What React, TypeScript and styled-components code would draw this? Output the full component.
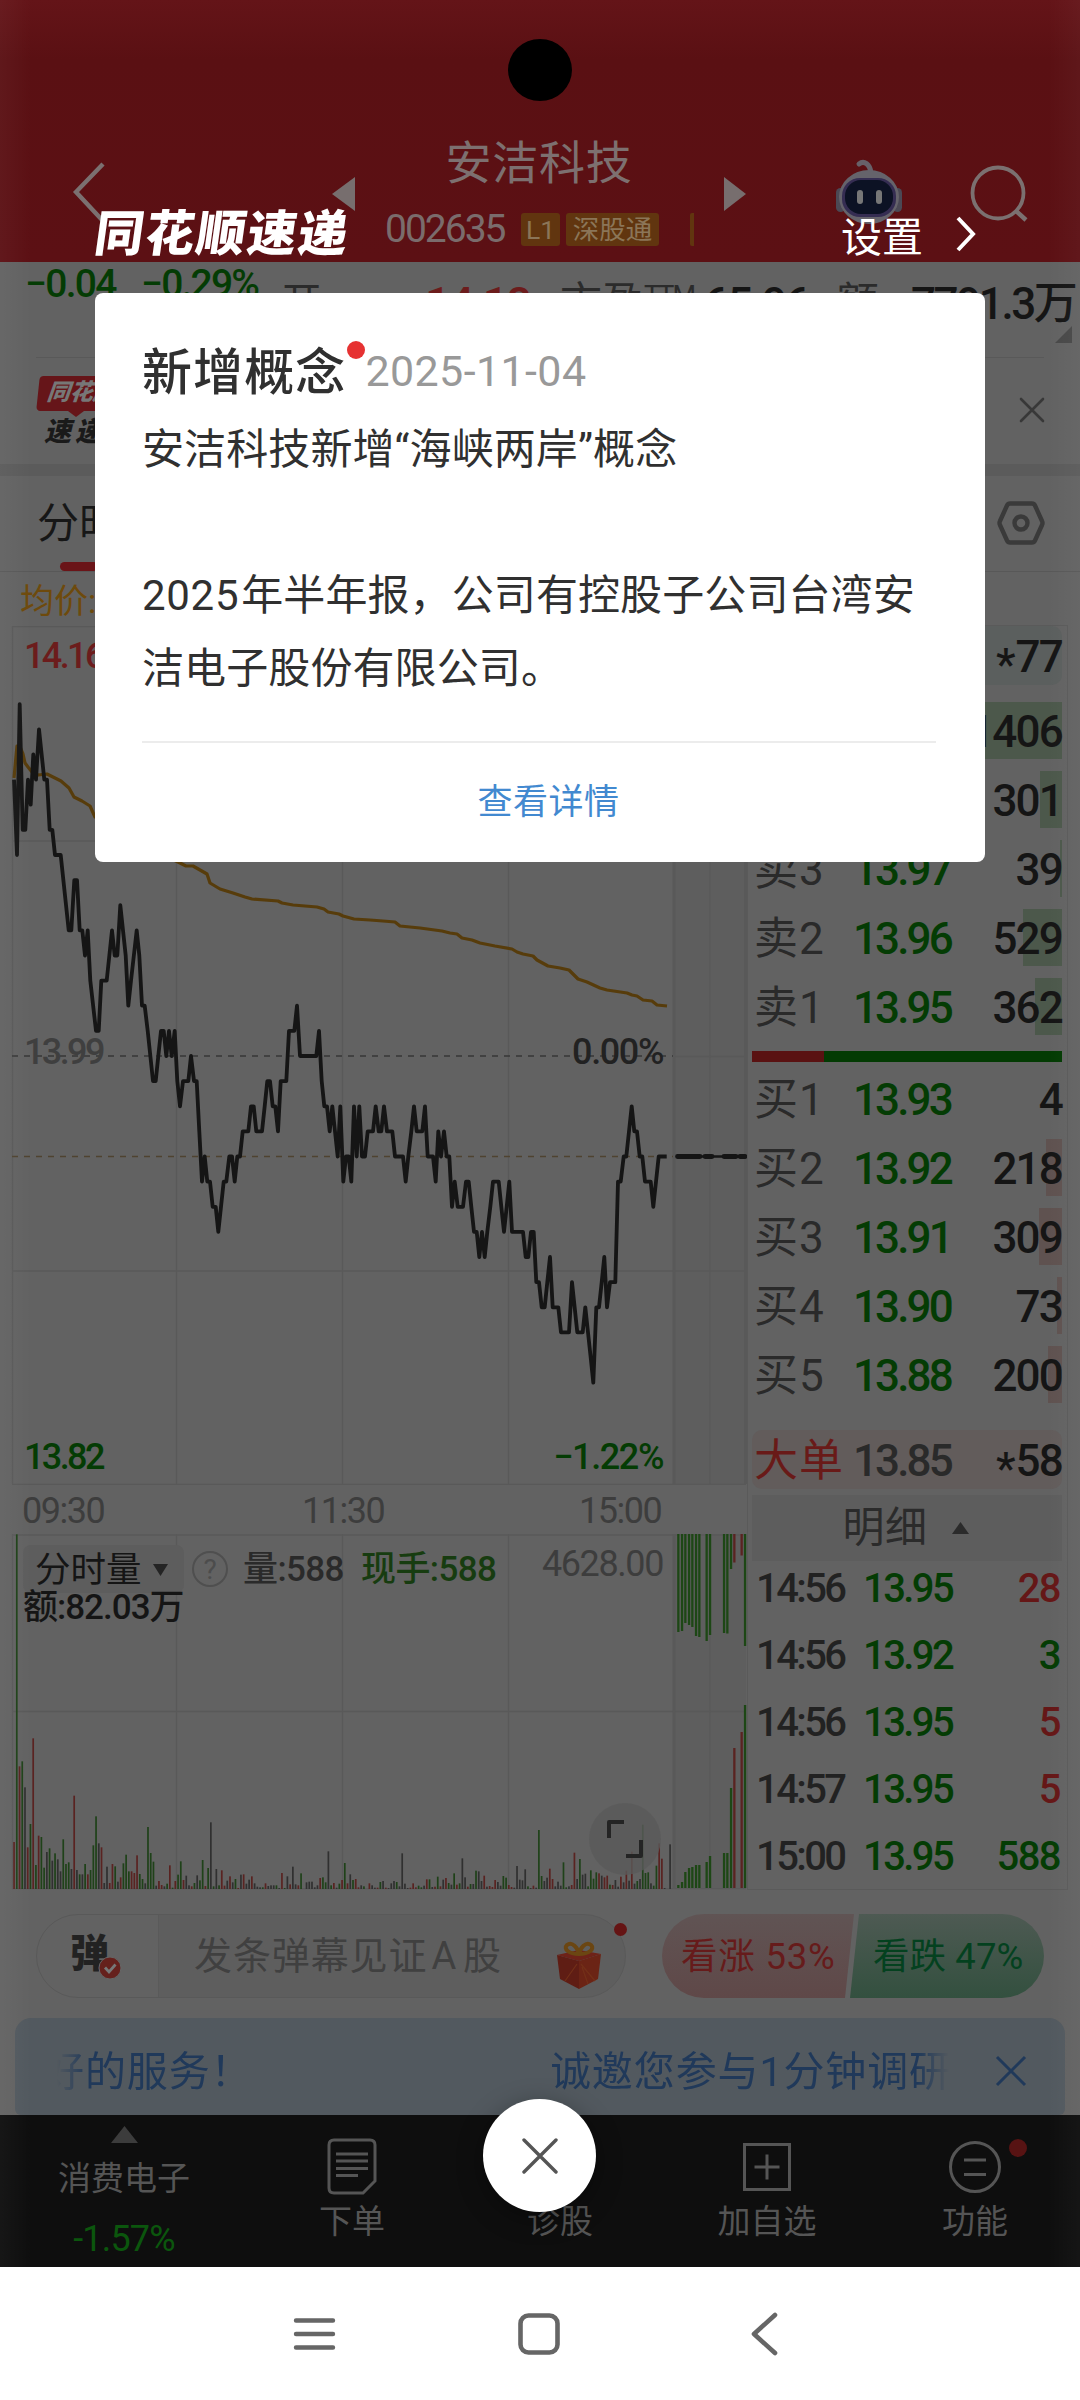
import React from "react";
import styled, { createGlobalStyle } from "styled-components";

const GlobalStyle = createGlobalStyle`
  * { box-sizing: border-box; }
  body {
    margin: 0;
    background: #626262;
    font-family: Roboto, "Noto Sans CJK SC", sans-serif;
    -webkit-font-smoothing: antialiased;
  }
`;

const GREEN = "#043c04";
const RED = "#6c1c1c";
const INK = "#151515";
const GRID = "#595959";

const Page = styled.div`
  position: relative;
  display: flex;
  flex-direction: column;
  width: 1080px;
  height: 2400px;
  overflow: hidden;
  background: #626262;
  white-space: nowrap;
`;

/* ---------- header ---------- */

const Header = styled.header`
  display: flex;
  align-items: flex-start;
  flex: none;
  height: 262px;
  padding-top: 133px;
  background: linear-gradient(#641418, #5a1013 60px, #5c1014);
`;

const Glyph = styled.svg<{ $ml?: number; $mr?: number; $mt?: number }>`
  display: block;
  flex: none;
  overflow: visible;
  margin-left: ${(p) => p.$ml ?? 0}px;
  margin-right: ${(p) => p.$mr ?? 0}px;
  margin-top: ${(p) => p.$mt ?? 0}px;
`;

const StockTitle = styled.div`
  width: 369px;
`;

const StockName = styled.div`
  height: 58px;
  line-height: 61px;
  font-size: 46px;
  letter-spacing: 0.8px;
  text-align: center;
  text-indent: -1px;
  color: #7d7070;
`;

const StockCodeRow = styled.div`
  display: flex;
  align-items: center;
  height: 44px;
  margin-top: 16px;
  padding-left: 30px;
`;

const StockCode = styled.span`
  width: 136px;
  font-size: 39px;
  letter-spacing: -2px;
  color: #7a6c6c;
`;

const Badge = styled.span<{ $w: number }>`
  width: ${(p) => p.$w}px;
  height: 33px;
  margin-right: 6px;
  border-radius: 3px;
  background: #61350f;
  color: #8b7558;
  font-size: 26.5px;
  line-height: 33px;
  text-align: center;
`;

const BadgeEdge = styled.span`
  width: 4px;
  height: 33px;
  margin-left: 25px;
  border-radius: 2px 0 0 2px;
  background: #61350f;
`;

const Camera = styled.div`
  position: absolute;
  left: 508px;
  top: 39px;
  width: 64px;
  height: 62px;
  border-radius: 50%;
  background: #000;
`;

/* ---------- quote strip ---------- */

const QuoteStrip = styled.section`
  display: flex;
  flex: none;
  height: 95px;
`;

const QuoteCell = styled.span<{ $w: number; $c: string; $s?: number; $top?: number; $ls?: number; $bold?: boolean; $pl?: number }>`
  width: ${(p) => p.$w}px;
  flex: none;
  padding-top: ${(p) => p.$top ?? 1}px;
  padding-left: ${(p) => p.$pl ?? 0}px;
  line-height: 42px;
  font-size: ${(p) => p.$s ?? 45}px;
  letter-spacing: ${(p) => p.$ls ?? -2}px;
  font-weight: ${(p) => (p.$bold ? 500 : 400)};
  color: ${(p) => p.$c};
`;

const Suffix = styled.small`
  position: relative;
  top: -12px;
  font-size: 27px;
  letter-spacing: -2px;
`;

const NewsStrip = styled.section`
  display: flex;
  justify-content: space-between;
  flex: none;
  height: 107px;
  margin: 0 36px;
  padding-top: 18px;
  border-top: 1px solid #595959;
`;

const NewsLogo = styled.div`
  width: 90px;
  font-style: italic;
  font-weight: 900;
`;

const NewsLogoTop = styled.div`
  width: 84px;
  height: 35px;
  margin-left: 2px;
  padding: 2px 0 0 9px;
  border-radius: 4px;
  transform: skewX(-6deg);
  background: #661519;
  color: #777;
  font-size: 23px;
  line-height: 30px;
`;

const NewsLogoTail = styled.div`
  width: 0;
  height: 0;
  margin-left: 32px;
  border: 8px solid transparent;
  border-top: 6px solid #661519;
  border-bottom: 0;
`;

const NewsLogoBottom = styled.div`
  padding-left: 8px;
  font-size: 27px;
  line-height: 31px;
  letter-spacing: 4px;
  color: #1a1a1a;
`;

const Band = styled.div`
  flex: none;
  height: 12px;
  background: #5b5b5b;
`;

const TabStrip = styled.nav`
  display: flex;
  justify-content: space-between;
  flex: none;
  height: 96px;
  padding: 0 36px 0 37px;
  border-bottom: 1px solid #585858;
`;

const Tab = styled.div`
  display: flex;
  flex-direction: column;
  align-items: center;
  height: 95px;
  font-size: 42px;
  line-height: 96px;
  color: #171717;
  &::after {
    content: "";
    flex: none;
    width: 38px;
    height: 9px;
    margin-top: -10px;
    border-radius: 5px;
    background: #6a1418;
  }
`;

/* ---------- market area ---------- */

const Market = styled.main`
  display: grid;
  grid-template-columns: 747px 321px;
  flex: none;
  height: 1318px;
`;

const ChartColumn = styled.section`
  display: flex;
  flex-direction: column;
`;

const AverageLabel = styled.div`
  height: 54px;
  padding-left: 20px;
  line-height: 58px;
  font-size: 34px;
  color: #6e4a0c;
`;

const PricePane = styled.div`
  position: relative;
  height: 859px;
`;

const AxisLabel = styled.span<{ $c: string; $y: number; $x?: number; $r?: number; $light?: boolean }>`
  position: absolute;
  top: ${(p) => p.$y}px;
  left: ${(p) => (p.$x === undefined ? "auto" : p.$x + "px")};
  right: ${(p) => (p.$r === undefined ? "auto" : p.$r + "px")};
  font-size: 36px;
  line-height: 40px;
  font-weight: ${(p) => (p.$light ? 400 : 500)};
  letter-spacing: ${(p) => (p.$x === undefined ? -1.4 : -2.6)}px;
  color: ${(p) => p.$c};
`;

const TimeAxis = styled.div`
  display: grid;
  grid-template-columns: 280px 277px 1fr;
  height: 49px;
  padding-left: 22px;
  line-height: 53px;
  font-size: 36px;
  letter-spacing: -1.5px;
  color: #3d3d3d;
`;

const VolumePane = styled.div`
  position: relative;
  height: 356px;
`;

const VolumeHead = styled.div`
  position: absolute;
  left: 23px;
  top: 11px;
  display: flex;
  align-items: center;
  width: 640px;
  height: 48px;
  line-height: 34px;
`;

const IndicatorPick = styled.div`
  display: flex;
  align-items: center;
  justify-content: space-between;
  width: 161px;
  height: 48px;
  padding: 2px 15px 0 12px;
  border-radius: 8px;
  background: #5d5d5d;
  font-size: 35.5px;
  line-height: 34px;
  color: ${INK};
`;

const HelpDot = styled.div`
  width: 36px;
  height: 36px;
  margin: 0 15px 0 8px;
  border: 2px solid #4f4f4f;
  border-radius: 50%;
  text-align: center;
  font-size: 28px;
  line-height: 33px;
  color: #4c4c4c;
`;

const VolumeText = styled.span<{ $c: string; $w: number }>`
  width: ${(p) => p.$w}px;
  margin-top: 1px;
  font-size: 35px;
  font-weight: 500;
  letter-spacing: -0.6px;
  color: ${(p) => p.$c};
`;

const Turnover = styled.div`
  position: absolute;
  left: 23px;
  top: 57px;
  font-size: 35px;
  line-height: 34px;
  font-weight: 500;
  letter-spacing: -1px;
  color: ${INK};
`;

const ExpandButton = styled.div`
  position: absolute;
  left: 589px;
  top: 269px;
  width: 72px;
  height: 72px;
  border-radius: 50%;
  background: rgba(90, 90, 90, 0.8);
`;

/* ---------- order book ---------- */

const Book = styled.section`
  display: flex;
  flex-direction: column;
  height: 1265px;
  margin-top: 53px;
  padding-left: 4px;
  padding-right: 5px;
  border: 1px solid #5a5a5a;
`;

const BigOrder = styled.div<{ $bg: string }>`
  display: grid;
  grid-template-columns: 99px 110px 1fr;
  flex: none;
  height: 59px;
  padding-left: 2px;
  border-radius: 10px;
  background: ${(p) => p.$bg};
  line-height: 62px;
`;

const Levels = styled.div<{ $top: number; $h: number }>`
  display: flex;
  flex-direction: column;
  flex: none;
  height: ${(p) => p.$h}px;
  padding-top: ${(p) => p.$top}px;
`;

const Level = styled.div<{ $bar: number; $tint: string }>`
  display: grid;
  grid-template-columns: 99px 110px 1fr;
  flex: none;
  height: 57px;
  margin-bottom: 12px;
  padding-left: 2px;
  line-height: 61px;
  background: linear-gradient(${(p) => p.$tint}, ${(p) => p.$tint}) right / ${(p) => p.$bar}px 100% no-repeat;
`;

const Side = styled.span<{ $c?: string }>`
  font-size: 44px;
  letter-spacing: 1px;
  color: ${(p) => p.$c ?? "#2a2a2a"};
`;

const Price = styled.span<{ $c: string }>`
  font-size: 44px;
  font-weight: 500;
  letter-spacing: -2.9px;
  color: ${(p) => p.$c};
`;

const Amount = styled.span<{ $c?: string }>`
  font-size: 44px;
  font-weight: 500;
  letter-spacing: -1.8px;
  text-align: right;
  color: ${(p) => p.$c ?? INK};
`;

const Star = styled.span`
  position: relative;
  top: 8px;
  letter-spacing: 0;
`;

const RatioBar = styled.div`
  flex: none;
  height: 11px;
  background: linear-gradient(90deg, #5a1212 0 72px, #033b03 72px);
`;

const DetailHead = styled.div`
  display: flex;
  align-items: center;
  justify-content: center;
  gap: 24px;
  flex: none;
  height: 66px;
  margin-top: 6px;
  padding-right: 3px;
  background: #5d5d5d;
  font-size: 42px;
  line-height: 66px;
  letter-spacing: 0.5px;
  color: #2b2b2b;
`;

const Trade = styled.div`
  display: grid;
  grid-template-columns: 107px 110px 1fr;
  flex: none;
  height: 67px;
  padding: 0 2px 0 4px;
  line-height: 55px;
  font-size: 40px;
  font-weight: 500;
`;

const TradeCell = styled.span<{ $c: string; $right?: boolean }>`
  color: ${(p) => p.$c};
  letter-spacing: ${(p) => (p.$right ? -1.6 : -2.6)}px;
  text-align: ${(p) => (p.$right ? "right" : "left")};
`;

/* ---------- footer strips ---------- */

const ChatRow = styled.section`
  display: flex;
  justify-content: space-between;
  flex: none;
  height: 128px;
  padding: 24px 36px 0;
`;

const ChatInput = styled.div`
  position: relative;
  display: flex;
  width: 590px;
  height: 84px;
  border: 1px solid #595959;
  border-radius: 42px;
  background: linear-gradient(90deg, #626262 121px, #5a5a5a 121px 122px, #5e5e5e 122px);
`;

const ChatMark = styled.div`
  width: 121px;
  padding-left: 33px;
  font-size: 39px;
  font-weight: 900;
  line-height: 78px;
  color: #222;
`;

const ChatHint = styled.div`
  flex: 1;
  padding-left: 36px;
  font-size: 38px;
  line-height: 83px;
  letter-spacing: 0.9px;
  color: #404040;
`;

const WideLetter = styled.span`
  margin: 0 6px 0 4px;
`;

const CheckDot = styled.svg`
  position: absolute;
  left: 61px;
  top: 41px;
`;

const NoticeDot = styled.i<{ $x: number; $y: number; $d: number; $c: string }>`
  position: absolute;
  left: ${(p) => p.$x}px;
  top: ${(p) => p.$y}px;
  width: ${(p) => p.$d}px;
  height: ${(p) => p.$d}px;
  border-radius: 50%;
  background: ${(p) => p.$c};
`;

const Vote = styled.div`
  display: flex;
  width: 382px;
  height: 84px;
  border-radius: 42px;
  overflow: hidden;
  font-size: 36.5px;
  line-height: 86px;
  letter-spacing: 0.1px;
`;

const VoteUp = styled.div`
  width: 192px;
  padding-left: 19px;
  background: linear-gradient(#605454, #5f4848);
  clip-path: polygon(0 0, 100% 0, calc(100% - 9px) 100%, 0 100%);
  letter-spacing: 0.8px;
  color: #661b1b;
`;

const VoteDown = styled.div`
  width: 195px;
  margin-left: -5px;
  padding-left: 24px;
  background: linear-gradient(#4e5a53, #33503f);
  clip-path: polygon(10px 0, 100% 0, 100% 100%, 1px 100%);
  color: #04411f;
`;

const SurveyBar = styled.section`
  display: flex;
  flex: none;
  height: 97px;
  margin: 0 15px;
  padding-left: 40px;
  border-radius: 16px 16px 6px 6px;
  background: #52595f;
  font-size: 41px;
  line-height: 108px;
  color: #20395a;
`;

const SurveyText = styled.div<{ $w: number; $side: "left" | "right" }>`
  display: flex;
  justify-content: ${(p) => (p.$side === "left" ? "flex-start" : "flex-end")};
  width: ${(p) => p.$w}px;
  letter-spacing: 0.9px;
  text-indent: ${(p) => (p.$side === "left" ? -12 : 0)}px;
  -webkit-mask-image: linear-gradient(to ${(p) => p.$side}, #000 calc(100% - 34px), transparent calc(100% - 2px));
  mask-image: linear-gradient(to ${(p) => p.$side}, #000 calc(100% - 34px), transparent calc(100% - 2px));
`;

const TabBar = styled.nav`
  display: grid;
  grid-template-columns: 248px 208px 208px 206px 210px;
  flex: none;
  height: 152px;
  background: #0e0e0e;
  color: #555;
`;

const BarItem = styled.div`
  position: relative;
  display: flex;
  flex-direction: column;
  align-items: center;
  justify-content: flex-end;
  padding-bottom: 25px;
  font-size: 33px;
  line-height: 40px;
`;

const BarLabel = styled.span`
  margin-top: 6px;
`;

const IndexItem = styled.div`
  display: flex;
  flex-direction: column;
  align-items: center;
  padding-top: 11px;
  font-size: 33px;
`;

const IndexName = styled.span`
  margin-top: 12px;
  line-height: 48px;
`;

const IndexChange = styled.span`
  margin-top: 15px;
  line-height: 42px;
  font-size: 36px;
  letter-spacing: -0.8px;
  color: #0b560d;
`;

const SystemBar = styled.footer`
  display: flex;
  flex: none;
  align-items: center;
  height: 133px;
  background: #fff;
`;

const EdgeGlow = styled.div`
  position: absolute;
  inset: 0 0 133px;
  pointer-events: none;
  background: linear-gradient(90deg, rgba(255, 255, 255, 0.035), transparent 32px calc(100% - 32px), rgba(255, 255, 255, 0.03));
`;

/* ---------- dialog layer ---------- */

const DialogLayer = styled.div`
  position: absolute;
  left: 95px;
  top: 205px;
  width: 890px;
`;

const DialogHead = styled.div`
  display: flex;
  height: 88px;
  color: #fff;
`;

const DialogBrand = styled.div`
  width: 746px;
  font-size: 49px;
  font-weight: 900;
  line-height: 59px;
  letter-spacing: 1.9px;
  transform: translateX(-2px) skewX(-8deg);
`;

const DialogSetting = styled.span`
  width: 115px;
  font-size: 41px;
  line-height: 66px;
`;

const Card = styled.article`
  display: flex;
  flex-direction: column;
  height: 569px;
  padding: 0 49px 0 47px;
  border-radius: 8px;
  background: #fff;
  color: #303030;
`;

const CardTitle = styled.div`
  position: relative;
  display: flex;
  flex: none;
  align-items: center;
  height: 118px;
  padding-top: 31px;
  font-size: 50px;
  font-weight: 500;
  letter-spacing: 1.1px;
`;

const CardDate = styled.span`
  padding-top: 6px;
  padding-left: 19px;
  font-size: 43px;
  font-weight: 400;
  letter-spacing: 0.4px;
  color: #999;
`;

const CardBody = styled.p`
  flex: none;
  height: 294px;
  margin: 0;
  padding-top: 2px;
  font-size: 42px;
  line-height: 73px;
  letter-spacing: 0.1px;
  white-space: pre-line;
`;

const Year = styled.span`
  margin-right: 2px;
  letter-spacing: 0.7px;
`;

const CardLink = styled.div`
  flex: none;
  margin-top: 36px;
  padding-left: 19px;
  border-top: 2px solid #ececec;
  text-align: center;
  font-size: 35px;
  line-height: 119px;
  letter-spacing: 0.5px;
  color: #4289d0;
`;

const CloseButton = styled.button`
  position: absolute;
  left: 483px;
  top: 2099px;
  display: flex;
  align-items: center;
  justify-content: center;
  width: 113px;
  height: 113px;
  padding: 0;
  border: 0;
  border-radius: 50%;
  background: #fff;
  box-shadow: 0 6px 26px rgba(0, 0, 0, 0.35);
`;

/* ---------- data ---------- */

/* Session trace: third-of-pixel time, ticks below the previous close. */
const TRACE =
  "42,-11 51,-8 59,-14 68,-9 76,-9 84,-11 92,-10 100,-12 108,-11 117,-13 133,-11 141,-11 149,-9 157,-9 165,-8 182,-8 206,-5 214,-5 223,-7 231,-7 239,-5 247,-5 255,-4 263,-5 271,-3 288,-1 296,-1 304,-3 320,-3 336,-5 344,-4 352,-4 361,-6 377,-4 385,-2 393,-3 410,-5 418,-4 426,-2 434,-2 443,-1 459,1 467,1 475,0 483,-1 491,-1 499,0 507,-1 515,0 524,-1 532,1 540,2 549,1 565,1 573,0 582,1 590,1 598,3 606,5 614,4 622,5 630,5 638,6 647,6 655,7 663,6 671,5 679,5 688,4 696,4 704,5 712,4 720,4 728,3 745,3 753,2 761,2 769,3 786,3 794,2 802,1 810,1 818,2 826,2 834,3 842,1 859,1 867,-1 883,-1 891,-2 900,0 949,0 957,-1 965,1 973,2 981,2 989,3 997,2 1005,3 1013,4 1021,2 1030,5 1038,4 1046,4 1054,5 1062,2 1070,4 1078,2 1086,4 1095,4 1103,3 1119,3 1127,2 1136,3 1144,3 1152,2 1161,3 1177,3 1185,4 1209,4 1217,5 1225,4 1234,3 1242,2 1250,3 1267,3 1275,2 1283,4 1299,4 1307,5 1315,3 1323,4 1332,3 1340,4 1348,4 1356,6 1364,5 1373,6 1389,6 1398,5 1406,5 1414,6 1422,7 1430,7 1438,8 1446,7 1454,8 1462,7 1471,6 1479,5 1496,5 1504,6 1512,7 1520,6 1528,5 1536,7 1569,7 1577,8 1585,8 1593,7 1601,7 1609,9 1617,9 1625,10 1634,10 1642,9 1650,8 1658,10 1675,10 1683,11 1707,11 1716,9 1732,11 1748,11 1756,10 1764,11 1772,12 1780,13 1789,10 1797,10 1805,9 1813,8 1821,10 1830,9 1846,9 1854,5 1862,5 1871,4 1879,4 1887,3 1895,2 1903,3 1911,3 1919,4 1927,4 1935,5 1952,5 1960,6 1968,5 1976,4 2000,4";

const tracePoints = TRACE.split(" ")
  .map((p) => {
    const [x, n] = p.split(",").map(Number);
    return `${(x / 3).toFixed(1)},${(430 + n * 25.13).toFixed(1)}`;
  })
  .join(" ");

const AVERAGE =
  "14,152 17,120 20,121 23,128 25,137 28,141 32,146 38,149 47,148 55,152 61,155 69,162 74,171 82,175 90,180 95,191 130,214 178,236 186,240 193,240 200,244 207,248 210,257 220,263 233,267 239,269 245,271 252,273 278,275 282,277 293,279 317,281 324,283 328,286 339,288 343,290 354,293 370,294 383,295 395,296 400,300 420,302 442,305 450,307 457,308 462,312 472,314 480,317 495,320 512,323 517,326 523,328 533,330 537,334 548,340 560,342 569,344 578,353 587,356 600,362 607,364 627,367 632,369 637,370 643,374 652,375 657,379 667,380";

/* Minute volume: colour key followed by height in third-of-pixels. */
const VOLUME =
  "r141 g1064 r368 g383 k305 r125 g195 r452 g72 r160 g156 g64 k111 g122 k85 g107 k89 k53 g149 g75 g80 k60 r280 k57 g44 k44 g75 r44 g57 g131 g218 k137 r125 k18 k67 r18 r75 g68 k22 r35 g77 g103 g53 r53 r48 r101 g45 g30 k17 g186 g108 g82 k10 r24 r12 k8 g16 r71 g4 r24 g43 g83 r27 k40 k11 r8 g18 k41 g26 g87 r9 g63 k200 g8 k60 g11 r56 r10 k25 r38 k20 g30 r3 k43 r44 k16 k28 r38 k17 k7 k5 g5 r17 k9 k11 k11 g11 k3 r48 g3 k38 r14 k67 k14 r11 g47 k0 k20 k22 k22 k5 k11 r33 g35 g20 k113 g11 r18 k4 g16 r27 g78 r17 k44 g27 r30 r5 k11 g8 k0 r17 k11 k4 r4 g21 k24 r4 k3 k17 k24 g21 k8 k107 k16 k3 r4 r17 r5 g10 g5 k10 r29 g29 k6 r7 g37 r8 k28 r33 g18 k13 g47 r13 g17 k92 k35 r7 g15 k15 g55 k53 k24 r40 k7 r9 r6 r27 k21 k10 g39 g34 r12 r6 k4 k69 k28 k26 k59 g8 k3 r10 k4 g177 g39 k24 k34 r61 r30 k8 k22 k10 g80 g5 k8 r12 r109 k30 g90 k43 k46 g8 g56 g31 g50 r47 k40 r35 r40 g13 r12 k27 k7 r37 k20 r55 k25 r112 k16 g24 k30 g193 g48 g50 k17 g10 g70 r137 r91 k3 k0 k134";

const VOLUME_COLOR: Record<string, string> = { r: "#5a2321", g: "#1f4219", k: "#303030" };

const volumeBars = VOLUME.split(" ").map((v, i) => ({
  color: VOLUME_COLOR[v[0]],
  x: 14 + i * 2.7335,
  h: Number(v.slice(1)) / 3,
}));

/* After-hours columns: x, height from top, height from bottom, falling or rising. */
const AFTER_HOURS: [number, number, number, string][] = [
  [678.3, 98, 3, "g"], [682, 97, 6, "g"], [685.3, 89, 16, "g"], [689, 91, 20, "g"], [692.3, 93, 21, "g"],
  [696, 102, 23, "g"], [699.3, 103, 23, "g"], [706.6, 107, 26, "g"], [710, 101, 32, "g"], [724, 99, 35, "g"],
  [727.3, 99.5, 35, "g"], [731, 35, 100, "g"], [734.3, 28.5, 140, "r"], [741.6, 21.5, 156, "r"], [745, 112, 183, "g"],
];

const SELLS = [
  { side: "", price: "", amount: "1406", bar: 103 },
  { side: "", price: "", amount: "301", bar: 22 },
  { side: "卖3", price: "13.97", amount: "39", bar: 2 },
  { side: "卖2", price: "13.96", amount: "529", bar: 39 },
  { side: "卖1", price: "13.95", amount: "362", bar: 27 },
];

const BUYS = [
  { side: "买1", price: "13.93", amount: "4", bar: 0 },
  { side: "买2", price: "13.92", amount: "218", bar: 16 },
  { side: "买3", price: "13.91", amount: "309", bar: 23 },
  { side: "买4", price: "13.90", amount: "73", bar: 5 },
  { side: "买5", price: "13.88", amount: "200", bar: 14 },
];

const TRADES = [
  { time: "14:56", price: "13.95", amount: "28", up: true },
  { time: "14:56", price: "13.92", amount: "3", up: false },
  { time: "14:56", price: "13.95", amount: "5", up: true },
  { time: "14:57", price: "13.95", amount: "5", up: true },
  { time: "15:00", price: "13.95", amount: "588", up: false },
];

/* ---------- drawings ---------- */

const Robot = () => (
  <Glyph $ml={89} $mt={27} width="68" height="66" viewBox="0 0 68 66">
    <path d="M24 4c5-4 11 0 12 9" fill="none" stroke="#676169" strokeWidth="5" strokeLinecap="round" />
    <rect x="1" y="28" width="9" height="24" rx="4.5" fill="#4b4955" />
    <rect x="58" y="28" width="9" height="24" rx="4.5" fill="#4b4955" />
    <ellipse cx="34" cy="37" rx="30" ry="27" fill="#65636b" />
    <rect x="7" y="18" width="54" height="39" rx="18" fill="#352d52" />
    <rect x="10" y="20" width="48" height="34" rx="16" fill="#0c1224" />
    <rect x="22" y="30" width="6" height="14" rx="3" fill="#777" />
    <rect x="41" y="30" width="6" height="14" rx="3" fill="#777" />
  </Glyph>
);

const Gift = () => (
  <Glyph $mt={25} $mr={20} width="50" height="50" viewBox="0 0 50 50">
    <path d="M2 15l22-5 22 4-22 7z" fill="#6e2218" />
    <path d="M24 14C14 14 8 9 12 5c5-4 11 3 12 9zM24 14c10 0 16-5 12-9-5-4-11 3-12 9z" fill="none" stroke="#6b4612" strokeWidth="4" />
    <path d="M2 15l22 6v28L5 39z" fill="#5f1d14" />
    <path d="M46 14l-22 7v28l19-10z" fill="#6b2415" />
    <path d="M10 41L22 24M40 41L26 24M33 44l-6-17" stroke="#733018" strokeWidth="1.2" />
  </Glyph>
);

const PriceChart = () => (
  <svg width="747" height="859" viewBox="0 0 747 859">
    <rect x="673" y="0" width="73" height="858" fill="#5e5e5e" />
    <g stroke={GRID} strokeWidth="1.3" fill="none">
      <path d="M12 .7H745M12.5 0V858M12 858.3H746M12 215H746M12 645H746M176.5 0V858M342.5 0V858M508.5 0V858M710 0V858M673 430.5H746" />
      <path d="M674 0V858M745.5 0V858" strokeWidth="3" />
    </g>
    <path d="M12 430H673" stroke="#373737" strokeWidth="1.6" strokeDasharray="6 6" />
    <path d="M12 530.5H673" stroke="#4f4330" strokeWidth="1.6" strokeDasharray="6 6" />
    <polyline points={AVERAGE} fill="none" stroke="#573c0b" strokeWidth="3.2" strokeLinejoin="round" />
    <polyline points={tracePoints} fill="none" stroke={INK} strokeWidth="3.8" strokeLinejoin="round" />
    <path d="M676 530.5H746" stroke={INK} strokeWidth="2.4" />
    <path d="M677.5 530.5H700M705 530.5H712M724 530.5H736M740 530.5H745" stroke={INK} strokeWidth="4.8" strokeLinecap="round" />
  </svg>
);

const VolumeChart = () => (
  <svg width="747" height="356" viewBox="0 0 747 356">
    <rect x="673" y="0" width="73" height="355" fill="#5e5e5e" />
    <g stroke={GRID} strokeWidth="1.3" fill="none">
      <path d="M12 1H746M12.5 0V355M12 354.6H746M12 177.5H746M176.5 0V355M342.5 0V355M508.5 0V355M710 0V355" />
      <path d="M674 0V355" strokeWidth="3" />
    </g>
    {volumeBars.map((b, i) => (
      <rect key={i} x={b.x - 0.8} y={355 - b.h} width="1.7" height={b.h} fill={b.color} />
    ))}
    {AFTER_HOURS.map(([x, top, bottom, kind]) => (
      <g key={x} fill={kind === "g" ? "#1d4715" : "#5a2321"}>
        <rect x={x - 1.1} y="0" width="2.3" height={top} />
        <rect x={x - 1.1} y={354 - bottom} width="2.3" height={bottom} />
      </g>
    ))}
  </svg>
);

const Cross = ({ r, stroke, w }: { r: number; stroke: string; w: number }) => (
  <svg width={r * 2 + 4} height={r * 2 + 4} viewBox={`${-r - 2} ${-r - 2} ${r * 2 + 4} ${r * 2 + 4}`}>
    <path d={`M${-r} ${-r}L${r} ${r}M${r} ${-r}L${-r} ${r}`} stroke={stroke} strokeWidth={w} strokeLinecap="round" />
  </svg>
);

export default function App() {
  return (
    <Page>
      <GlobalStyle />
      <Header>
        <Glyph $ml={72} $mt={28} width="34" height="64" viewBox="0 0 34 64">
          <path d="M31 3L4 31L31 60" fill="none" stroke="#7b7070" strokeWidth="4.4" />
        </Glyph>
        <Glyph $ml={226} $mt={44} width="23" height="34" viewBox="0 0 23 34">
          <path d="M0 17L23 0V34z" fill="#776e6e" />
        </Glyph>
        <StockTitle>
          <StockName>安洁科技</StockName>
          <StockCodeRow>
            <StockCode>002635</StockCode>
            <Badge $w={39}>L1</Badge>
            <Badge $w={93}>深股通</Badge>
            <BadgeEdge />
          </StockCodeRow>
        </StockTitle>
        <Glyph $mt={44} width="22" height="34" viewBox="0 0 22 34">
          <path d="M22 17L0 0V34z" fill="#776e6e" />
        </Glyph>
        <Robot />
        <Glyph $ml={67} $mt={33} width="58" height="58" viewBox="0 0 58 58">
          <circle cx="28" cy="27" r="25.5" fill="none" stroke="#7b7070" strokeWidth="3.8" />
          <path d="M46 45L56 54" stroke="#7b7070" strokeWidth="4.4" />
        </Glyph>
      </Header>

      <QuoteStrip>
        <QuoteCell $w={141} $c={GREEN} $s={39} $ls={-1.7} $pl={25} $bold>−0.04</QuoteCell>
        <QuoteCell $w={140} $c={GREEN} $s={39} $ls={-1.8} $bold>−0.29%</QuoteCell>
        <QuoteCell $w={144} $c="#2b2b2b" $s={41} $top={20}>开</QuoteCell>
        <QuoteCell $w={135} $c={RED} $top={21} $bold>14.18</QuoteCell>
        <QuoteCell $w={144} $c="#2b2b2b" $s={42} $top={20} $ls={0}>市盈<Suffix>TTM</Suffix></QuoteCell>
        <QuoteCell $w={133} $c={INK} $top={21} $bold>65.96</QuoteCell>
        <QuoteCell $w={74} $c="#2b2b2b" $s={42} $top={20}>额</QuoteCell>
        <QuoteCell $w={156} $c={INK} $s={44} $top={21} $ls={-2.4} $bold>7791.3万</QuoteCell>
        <Glyph $ml={-12} $mt={64} width="17" height="17" viewBox="0 0 17 17">
          <path d="M17 0V17H0z" fill="#484848" />
        </Glyph>
      </QuoteStrip>

      <NewsStrip>
        <NewsLogo>
          <NewsLogoTop>同花顺</NewsLogoTop>
          <NewsLogoTail />
          <NewsLogoBottom>速递</NewsLogoBottom>
        </NewsLogo>
        <Glyph $mt={22} width="24" height="24" viewBox="0 0 24 24">
          <path d="M1 1L23 23M23 1L1 23" stroke="#383838" strokeWidth="2.6" strokeLinecap="round" />
        </Glyph>
      </NewsStrip>
      <Band />
      <TabStrip>
        <Tab>分时</Tab>
        <Glyph $mt={25} width="46" height="44" viewBox="0 0 46 44">
          <path d="M12 2.5H34Q36 2.5 37 4.5L44 20Q45 22 44 24L37 39.5Q36 41.5 34 41.5H12Q10 41.5 9 39.5L2 24Q1 22 2 20L9 4.5Q10 2.5 12 2.5z" fill="none" stroke="#3a3a3a" strokeWidth="4.4" />
          <circle cx="23" cy="22" r="6.5" fill="none" stroke="#3a3a3a" strokeWidth="4.4" />
        </Glyph>
      </TabStrip>

      <Market>
        <ChartColumn>
          <AverageLabel>均价:</AverageLabel>
          <PricePane>
            <PriceChart />
            <AxisLabel $c={RED} $x={24} $y={10}>14.16</AxisLabel>
            <AxisLabel $c="#3f3f3f" $x={24} $y={406}>13.99</AxisLabel>
            <AxisLabel $c="#222" $r={84} $y={406}>0.00%</AxisLabel>
            <AxisLabel $c={GREEN} $x={24} $y={811}>13.82</AxisLabel>
            <AxisLabel $c={GREEN} $r={84} $y={811}>−1.22%</AxisLabel>
          </PricePane>
          <TimeAxis>
            <span>09:30</span>
            <span>11:30</span>
            <span>15:00</span>
          </TimeAxis>
          <VolumePane>
            <VolumeChart />
            <VolumeHead>
              <IndicatorPick>
                分时量
                <svg width="17" height="12" viewBox="0 0 17 12"><path d="M1 0H16L8.5 12z" fill="#242424" /></svg>
              </IndicatorPick>
              <HelpDot>?</HelpDot>
              <VolumeText $c="#2a2a2a" $w={118}>量:588</VolumeText>
              <VolumeText $c="#173c10" $w={150}>现手:588</VolumeText>
            </VolumeHead>
            <AxisLabel $c="#3d3d3d" $r={84} $y={10} $light>4628.00</AxisLabel>
            <Turnover>额:82.03万</Turnover>
            <ExpandButton>
              <svg width="72" height="72" viewBox="0 0 72 72">
                <path d="M20 35V19H35M52 37V53H37" fill="none" stroke="#242424" strokeWidth="4" strokeLinejoin="round" />
              </svg>
            </ExpandButton>
          </VolumePane>
        </ChartColumn>

        <Book>
          <BigOrder $bg="#5b5f5e">
            <Side /><Price $c={INK} /><Amount><Star>*</Star>77</Amount>
          </BigOrder>
          <Levels $top={17} $h={366}>
            {SELLS.map((l) => (
              <Level key={l.amount} $bar={l.bar} $tint="#4c584b">
                <Side>{l.side}</Side>
                <Price $c={GREEN}>{l.price}</Price>
                <Amount>{l.amount}</Amount>
              </Level>
            ))}
          </Levels>
          <RatioBar />
          <Levels $top={8} $h={368}>
            {BUYS.map((l) => (
              <Level key={l.side} $bar={l.bar} $tint="#5f5250">
                <Side>{l.side}</Side>
                <Price $c={GREEN}>{l.price}</Price>
                <Amount>{l.amount}</Amount>
              </Level>
            ))}
          </Levels>
          <BigOrder $bg="#625c5b">
            <Side $c="#691a18">大单</Side>
            <Price $c="#2a2a2a">13.85</Price>
            <Amount><Star>*</Star>58</Amount>
          </BigOrder>
          <DetailHead>
            明细
            <svg width="17" height="12" viewBox="0 0 17 12"><path d="M8.5 0L17 12H0z" fill="#2b2b2b" /></svg>
          </DetailHead>
          {TRADES.map((t, i) => (
            <Trade key={i}>
              <TradeCell $c="#222">{t.time}</TradeCell>
              <TradeCell $c={GREEN}>{t.price}</TradeCell>
              <TradeCell $c={t.up ? "#651717" : GREEN} $right>{t.amount}</TradeCell>
            </Trade>
          ))}
        </Book>
      </Market>

      <ChatRow>
        <ChatInput>
          <ChatMark>弹</ChatMark>
          <CheckDot width="24" height="24" viewBox="0 0 24 24">
            <circle cx="12" cy="12" r="11" fill="#65201c" stroke="#666" />
            <path d="M7 11.5L11 16L17.5 8.5" fill="none" stroke="#777" strokeWidth="2.8" />
          </CheckDot>
          <ChatHint>发条弹幕见证<WideLetter>A</WideLetter>股</ChatHint>
          <Gift />
          <NoticeDot $x={577} $y={8} $d={13} $c="#651414" />
        </ChatInput>
        <Vote>
          <VoteUp>看涨 53%</VoteUp>
          <VoteDown>看跌 47%</VoteDown>
        </Vote>
      </ChatRow>

      <SurveyBar>
        <SurveyText $w={497} $side="left">好的服务！</SurveyText>
        <SurveyText $w={399} $side="right">诚邀您参与1分钟调研</SurveyText>
        <Glyph $ml={44} $mt={37} width="32" height="32" viewBox="0 0 32 32">
          <path d="M2 2L30 30M30 2L2 30" stroke="#20395a" strokeWidth="3" />
        </Glyph>
      </SurveyBar>

      <TabBar>
        <IndexItem>
          <svg width="27" height="17" viewBox="0 0 27 17"><path d="M13.5 0L27 17H0z" fill="#3c3c3c" /></svg>
          <IndexName>消费电子</IndexName>
          <IndexChange>-1.57%</IndexChange>
        </IndexItem>
        <BarItem>
          <svg width="50" height="58" viewBox="0 0 50 58">
            <path d="M7 2H43Q48 2 48 7V43L36 55H7Q2 55 2 50V7Q2 2 7 2z" fill="none" stroke="#555" strokeWidth="3" />
            <path d="M9 16H41M9 23H41M9 30.5H41M9 37.5H31" stroke="#555" strokeWidth="2.8" />
          </svg>
          <BarLabel>下单</BarLabel>
        </BarItem>
        <BarItem>
          <BarLabel>诊股</BarLabel>
        </BarItem>
        <BarItem>
          <svg width="48" height="58" viewBox="0 0 48 58">
            <rect x="1.5" y="6.5" width="45" height="45" fill="none" stroke="#555" strokeWidth="3" />
            <path d="M11.5 29H36.5M24 16.5V41.5" stroke="#555" strokeWidth="3" />
          </svg>
          <BarLabel>加自选</BarLabel>
        </BarItem>
        <BarItem>
          <svg width="54" height="58" viewBox="0 0 54 58">
            <circle cx="27" cy="29" r="24.5" fill="none" stroke="#555" strokeWidth="3" />
            <path d="M16 22H38M16 36.5H38" stroke="#555" strokeWidth="3.2" />
          </svg>
          <BarLabel>功能</BarLabel>
          <NoticeDot $x={139} $y={24} $d={18} $c="#571313" />
        </BarItem>
      </TabBar>

      <SystemBar>
        <Glyph $ml={294} width="41" height="42" viewBox="0 0 41 42">
          <path d="M2 7.5H39M2 21H39M2 34.5H39" stroke="#666" strokeWidth="4.4" strokeLinecap="round" />
        </Glyph>
        <Glyph $ml={183} width="42" height="42" viewBox="0 0 42 42">
          <rect x="2.5" y="2.5" width="37" height="37" rx="8" fill="none" stroke="#666" strokeWidth="4.6" />
        </Glyph>
        <Glyph $ml={190} width="28" height="44" viewBox="0 0 28 44">
          <path d="M25 3L4 22L25 41" fill="none" stroke="#666" strokeWidth="4.6" strokeLinecap="round" strokeLinejoin="round" />
        </Glyph>
      </SystemBar>

      <EdgeGlow />
      <Camera />

      <DialogLayer>
        <DialogHead>
          <DialogBrand>同花顺速递</DialogBrand>
          <DialogSetting>设置</DialogSetting>
          <Glyph $mt={11} width="20" height="36" viewBox="0 0 20 36">
            <path d="M2 2L17 18L2 34" fill="none" stroke="#fff" strokeWidth="4" />
          </Glyph>
        </DialogHead>
        <Card>
          <CardTitle>
            新增概念
            <CardDate>2025-11-04</CardDate>
            <NoticeDot $x={205} $y={48} $d={18} $c="#e63232" />
          </CardTitle>
          <CardBody>
            {"安洁科技新增“海峡两岸”概念\n\n"}
            <Year>2025</Year>
            {"年半年报，公司有控股子公司台湾安\n洁电子股份有限公司。"}
          </CardBody>
          <CardLink>查看详情</CardLink>
        </Card>
      </DialogLayer>

      <CloseButton>
        <Cross r={16} stroke="#555" w={3.4} />
      </CloseButton>
    </Page>
  );
}
